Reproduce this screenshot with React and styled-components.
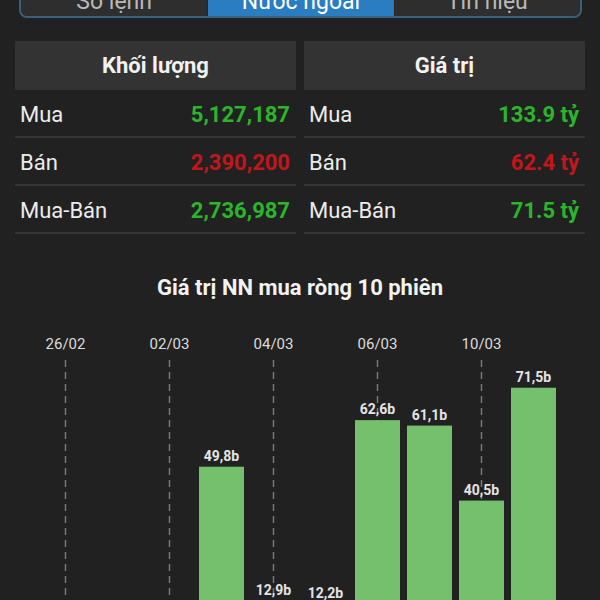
import React from 'react';
import styled, { createGlobalStyle } from 'styled-components';

const GlobalStyle = createGlobalStyle`
  body {
    margin: 0;
    background: #212121;
    font-family: Roboto, "Noto Sans", sans-serif;
    color: #ececec;
  }
`;

const Page = styled.div`
  width: 600px;
  height: 600px;
  overflow: hidden;
`;

const TabBar = styled.div`
  margin: -22px 18px 0 19px;
  height: 36px;
  display: grid;
  grid-template-columns: repeat(3, 1fr);
  border: 2px solid #3c5f80;
  border-radius: 8px;
  overflow: hidden;
  background: #2e2e2e;
`;

const Tab = styled.div`
  display: flex;
  align-items: center;
  justify-content: center;
  padding-top: 6px;
  font-size: 23px;
  color: ${(p) => (p.active ? '#ffffff' : '#b9b9b9')};
  background: ${(p) => (p.active ? '#2a7dc1' : '#2e2e2e')};
  border-left: ${(p) => (p.first ? 'none' : '1px solid #262626')};
`;

const Tables = styled.div`
  margin: 23px 15px 0 15px;
  display: grid;
  grid-template-columns: 1fr 1fr;
  column-gap: 8px;
`;

const Table = styled.div`
  display: flex;
  flex-direction: column;
`;

const TableHeader = styled.div`
  height: 49px;
  background: #333333;
  display: flex;
  align-items: center;
  justify-content: center;
  font-size: 22px;
  font-weight: 700;
  color: #f2f2f2;
`;

const Row = styled.div`
  height: 44px;
  padding: 2px 6px 0 5px;
  border-bottom: 2px solid #353535;
  display: flex;
  align-items: center;
  justify-content: space-between;
`;

const Label = styled.span`
  font-size: 22px;
  color: #ececec;
`;

const Value = styled.span`
  font-size: 22px;
  font-weight: 700;
  color: ${(p) => (p.tone === 'down' ? '#c2161c' : '#2bb52b')};
`;

const ChartTitle = styled.div`
  margin-top: 42px;
  height: 24px;
  line-height: 24px;
  text-align: center;
  font-size: 22px;
  font-weight: 700;
  color: #f2f2f2;
`;

const ChartBox = styled.svg`
  display: block;
  margin-top: 20px;
`;

const volume = [
  { label: 'Mua', value: '5,127,187', tone: 'up' },
  { label: 'Bán', value: '2,390,200', tone: 'down' },
  { label: 'Mua-Bán', value: '2,736,987', tone: 'up' },
];

const amount = [
  { label: 'Mua', value: '133.9 tỷ', tone: 'up' },
  { label: 'Bán', value: '62.4 tỷ', tone: 'down' },
  { label: 'Mua-Bán', value: '71.5 tỷ', tone: 'up' },
];

const sessions = [
  { date: '26/02', value: -18.4 },
  { date: '27/02', value: -9.6 },
  { date: '02/03', value: -25.1 },
  { date: '03/03', value: 49.8 },
  { date: '04/03', value: 12.9 },
  { date: '05/03', value: 12.2 },
  { date: '06/03', value: 62.6 },
  { date: '09/03', value: 61.1 },
  { date: '10/03', value: 40.5 },
  { date: '11/03', value: 71.5 },
];

const Chart = () => {
  const zero = 328;
  const scale = 3.64;
  const pitch = 52;
  const barW = 45;
  const first = 65.5;
  const fmt = (v) => `${v.toFixed(1).replace('.', ',')}b`;

  return (
    <ChartBox width="600" height="360" viewBox="0 0 600 360">
      {sessions.map((s, i) =>
        i % 2 === 0 ? (
          <g key={`d${s.date}`}>
            <text
              x={first + i * pitch}
              y="29"
              textAnchor="middle"
              fontSize="15"
              fill="#dcdcdc"
              fontFamily="Roboto, sans-serif"
            >
              {s.date}
            </text>
            <line
              x1={first + i * pitch}
              x2={first + i * pitch}
              y1="40"
              y2="360"
              stroke="#7a7a7a"
              strokeWidth="1.5"
              strokeDasharray="7 5"
            />
          </g>
        ) : null
      )}
      {sessions.map((s, i) => {
        const cx = first + i * pitch;
        const h = Math.abs(s.value) * scale;
        const top = s.value >= 0 ? zero - h : zero;
        return (
          <g key={`b${s.date}`}>
            <rect x={cx - barW / 2} y={top} width={barW} height={h} fill="#74c06c" />
            <text
              x={cx}
              y={s.value >= 0 ? top - 6 : top + h + 16}
              textAnchor="middle"
              fontSize="14"
              fontWeight="700"
              fill="#e4e4e4"
              fontFamily="Roboto, sans-serif"
            >
              {fmt(s.value)}
            </text>
          </g>
        );
      })}
    </ChartBox>
  );
};

const StatTable = ({ title, rows }) => (
  <Table>
    <TableHeader>{title}</TableHeader>
    {rows.map((r) => (
      <Row key={r.label}>
        <Label>{r.label}</Label>
        <Value tone={r.tone}>{r.value}</Value>
      </Row>
    ))}
  </Table>
);

const App = () => (
  <Page>
    <GlobalStyle />
    <TabBar>
      <Tab first>Sổ lệnh</Tab>
      <Tab active>Nước ngoài</Tab>
      <Tab>Tín hiệu</Tab>
    </TabBar>
    <Tables>
      <StatTable title="Khối lượng" rows={volume} />
      <StatTable title="Giá trị" rows={amount} />
    </Tables>
    <ChartTitle>Giá trị NN mua ròng 10 phiên</ChartTitle>
    <Chart />
  </Page>
);

export default App;
